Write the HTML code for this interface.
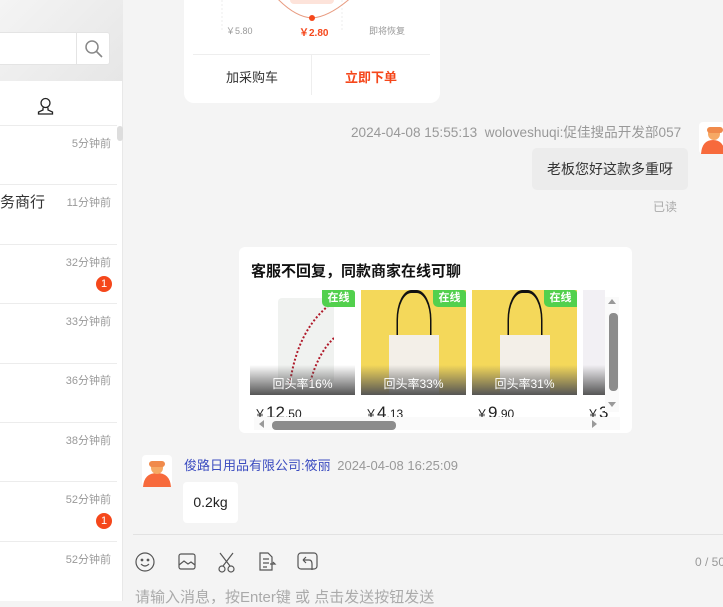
<!DOCTYPE html>
<html><head><meta charset="utf-8"><style>
*{margin:0;padding:0;box-sizing:border-box}
body{width:723px;height:601px;overflow:hidden;background:#f4f4f4;font-family:"Liberation Sans","Noto Sans CJK SC",sans-serif;position:relative}
.abs{position:absolute}
.left{left:0;top:0;width:123px;height:601px;background:#fff;border-right:1px solid #e8e8e8}
.hdr{left:0;top:0;width:123px;height:81px;background:linear-gradient(135deg,#f4f4f4,#e6e6e6)}
.sep{position:absolute;left:0;width:117px;height:1px;background:#ececec}
.tm{position:absolute;right:12px;font-size:11px;color:#999;white-space:nowrap;margin-top:-2px}
.badge{position:absolute;left:96px;width:16px;height:16px;border-radius:8px;background:#f5471b;color:#fff;font-size:11px;text-align:center;line-height:16px}
.card{background:#fff;border-radius:10px}
.prod{position:absolute;top:43px;width:105px;height:105px;overflow:hidden}
.online{position:absolute;right:0;top:0;width:33px;height:17px;background:#52d04d;color:#fff;font-size:11px;font-weight:bold;text-align:center;line-height:17px;border-radius:0 3px 0 5px}
.ov{position:absolute;left:0;bottom:0;width:105px;height:30px;background:linear-gradient(#ffffff00,#555);color:#fff;font-size:12px;text-align:center;line-height:38px}
.pr{position:absolute;top:156px;font-size:12px;color:#222}
.pr b{font-weight:normal;font-size:17px}
</style></head><body>
<div class="abs left"></div>
<div class="abs hdr"></div>
<div class="abs" style="left:0;top:32px;width:110px;height:33px;background:#fff;border:1px solid #e4e4e4;border-left:none;border-radius:0 3px 3px 0"></div>
<div class="abs" style="left:76px;top:32px;width:1px;height:33px;background:#e4e4e4"></div>
<svg class="abs" style="left:84px;top:39px" width="20" height="20" viewBox="0 0 20 20"><circle cx="8" cy="8" r="6" fill="none" stroke="#888" stroke-width="1.5"/><path d="M12.5 12.5L18 18" stroke="#888" stroke-width="1.6"/></svg>
<svg class="abs" style="left:37px;top:97px" width="17" height="18" viewBox="0 0 17 18"><circle cx="8.5" cy="6" r="4.5" fill="none" stroke="#222" stroke-width="1.3"/><path d="M6 10.5v2.5L1.5 15v2h14v-2L11 13v-2.5" fill="none" stroke="#222" stroke-width="1.3"/></svg>
<div class="abs" style="left:0;top:0;width:123px;height:601px">
<div class="sep" style="top:125px"></div>
<div class="abs" style="left:117px;top:126px;width:6px;height:15px;background:#ddd;border-radius:3px"></div>
<div class="tm" style="top:137px">5分钟前</div>
<div class="sep" style="top:184px"></div>
<div style="position:absolute;left:0;top:191px;font-size:15px;color:#333">务商行</div>
<div class="tm" style="top:196px">11分钟前</div>
<div class="sep" style="top:244px"></div>
<div class="tm" style="top:256px">32分钟前</div>
<div class="badge" style="top:276px">1</div>
<div class="sep" style="top:303px"></div>
<div class="tm" style="top:315px">33分钟前</div>
<div class="sep" style="top:363px"></div>
<div class="tm" style="top:374px">36分钟前</div>
<div class="sep" style="top:422px"></div>
<div class="tm" style="top:434px">38分钟前</div>
<div class="sep" style="top:481px"></div>
<div class="tm" style="top:493px">52分钟前</div>
<div class="badge" style="top:513px">1</div>
<div class="sep" style="top:541px"></div>
<div class="tm" style="top:553px">52分钟前</div>
</div>

<div class="abs card" style="left:184px;top:-20px;width:256px;height:123px"></div>
<svg class="abs" style="left:184px;top:0" width="256" height="40"><path d="M38 0v30M158 0v30" stroke="#eee" stroke-dasharray="2 2"/><path d="M90 -5Q110 17 128 18Q146 17 170 -5" fill="none" stroke="#e89b80" stroke-width="1"/><circle cx="128" cy="18" r="3" fill="#f5471b"/><rect x="106" y="-6" width="44" height="10" rx="4" fill="#fde3da"/></svg>
<div class="abs" style="left:226px;top:24px;font-size:9px;color:#999">￥5.80</div>
<div class="abs" style="left:299px;top:24px;font-size:10px;color:#f5471b;font-weight:bold">￥2.80</div>
<div class="abs" style="left:369px;top:24px;font-size:9px;color:#999">即将恢复</div>
<div class="abs" style="left:193px;top:54px;width:237px;height:1px;background:#eee"></div>
<div class="abs" style="left:311px;top:55px;width:1px;height:40px;background:#eee"></div>
<div class="abs" style="left:226px;top:67px;font-size:13px;color:#333">加采购车</div>
<div class="abs" style="left:345px;top:67px;font-size:13px;color:#f5471b;font-weight:bold">立即下单</div>

<div class="abs" style="left:351px;top:121px;font-size:13.6px;color:#999;white-space:nowrap">2024-04-08 15:55:13&nbsp; woloveshuqi:促佳搜品开发部057</div>
<svg class="abs" style="left:699px;top:122px" width="26" height="32"><rect width="26" height="32" rx="4" fill="#fff"/><path d="M2 32Q3 18 14 18Q25 18 26 32Z" fill="#f76a3c"/><circle cx="15" cy="12" r="6" fill="#f6a964"/><rect x="8" y="5" width="16" height="6" rx="3" fill="#f08a4b"/></svg>
<div class="abs" style="left:532px;top:148px;width:156px;height:42px;background:#ececec;border-radius:5px;font-size:14px;color:#333;line-height:42px;text-align:center">老板您好这款多重呀</div>
<div class="abs" style="left:653px;top:198px;font-size:12px;color:#aaa">已读</div>

<div class="abs card" style="left:239px;top:247px;width:393px;height:186px;border-radius:6px;overflow:hidden">
<div style="position:absolute;left:12px;top:13px;font-size:15px;font-weight:bold;color:#111">客服不回复，同款商家在线可聊</div>
<div class="prod" style="left:11px;background:#fff"><div style="position:absolute;left:28px;top:8px;width:56px;height:85px;background:#f0f2f0;border-radius:4px"></div><svg class="abs" style="left:28px;top:8px" width="56" height="85"><path d="M54 5Q20 30 12 85M56 40Q40 55 32 85" fill="none" stroke="#b01a2a" stroke-width="2" stroke-dasharray="2 2"/></svg><div class="online">在线</div><div class="ov">回头率16%</div></div>
<div class="prod" style="left:122px;background:#f4d85a"><div style="position:absolute;left:18px;top:0;width:70px;height:50px;border:3px solid #111;border-bottom:none;border-radius:30px 30px 0 0;transform:scaleX(.5)"></div><div style="position:absolute;left:28px;top:45px;width:50px;height:60px;background:#f3efe8"></div><div class="online">在线</div><div class="ov">回头率33%</div></div>
<div class="prod" style="left:233px;background:#f4d85a"><div style="position:absolute;left:18px;top:0;width:70px;height:50px;border:3px solid #111;border-bottom:none;border-radius:30px 30px 0 0;transform:scaleX(.5)"></div><div style="position:absolute;left:28px;top:45px;width:50px;height:60px;background:#f3efe8"></div><div class="online">在线</div><div class="ov">回头率31%</div></div>
<div class="prod" style="left:344px;width:22px;background:#f2f0f4"><div class="ov" style="width:22px"></div></div>
<div class="pr" style="left:15px">￥<b>12</b>.50</div>
<div class="pr" style="left:126px">￥<b>4</b>.13</div>
<div class="pr" style="left:237px">￥<b>9</b>.90</div>
<div class="pr" style="left:348px">￥<b>3</b></div>
<div style="position:absolute;left:366px;top:50px;width:14px;height:115px;background:#fafafa"></div>
<div style="position:absolute;left:369px;top:52px;border:4px solid transparent;border-bottom:5px solid #999;border-top:none"></div>
<div style="position:absolute;left:369px;top:155px;border:4px solid transparent;border-top:5px solid #999;border-bottom:none"></div>
<div style="position:absolute;left:370px;top:66px;width:9px;height:78px;background:#8c8c8c;border-radius:4px"></div>
<div style="position:absolute;left:15px;top:170px;width:366px;height:13px;background:#fafafa"></div>
<div style="position:absolute;left:20px;top:173px;border:4px solid transparent;border-right:5px solid #999;border-left:none"></div>
<div style="position:absolute;left:353px;top:173px;border:4px solid transparent;border-left:5px solid #999;border-right:none"></div>
<div style="position:absolute;left:33px;top:174px;width:124px;height:9px;background:#8c8c8c;border-radius:4px"></div>
</div>

<svg class="abs" style="left:142px;top:455px" width="30" height="32"><rect width="30" height="32" rx="4" fill="#fff"/><path d="M1 32Q2 18 15 18Q28 18 29 32Z" fill="#f76a3c"/><circle cx="15" cy="13" r="6" fill="#f6a964"/><rect x="7" y="6" width="16" height="6" rx="3" fill="#f08a4b"/></svg>
<div class="abs" style="left:184px;top:455px;font-size:13px;color:#3b4cc0;white-space:nowrap">俊路日用品有限公司:筱丽 <span style="color:#999;margin-left:3px">2024-04-08 16:25:09</span></div>
<div class="abs" style="left:183px;top:482px;width:55px;height:41px;background:#fff;border-radius:4px;font-size:14px;color:#222;text-align:center;line-height:41px">0.2kg</div>
<div class="abs" style="left:133px;top:534px;width:590px;height:1px;background:#e2e2e2"></div>
<svg class="abs" style="left:133px;top:550px" width="200" height="24" fill="none" stroke="#555" stroke-width="1.2"><circle cx="12" cy="12" r="9"/><circle cx="9" cy="10" r=".8" fill="#555"/><circle cx="15" cy="10" r=".8" fill="#555"/><path d="M8 14q4 4 8 0"/><rect x="46" y="4" width="16" height="15" rx="2"/><path d="M46 15l5-4 4 3 3-2 4 3"/><circle cx="89" cy="19" r="3"/><circle cx="98" cy="19" r="3"/><path d="M90 16L100 3M97 16L87 3"/><path d="M127 3h8l4 4v13h-12z M130 9h6M130 13h6M130 17h4M137 14h5l-2-2"/><rect x="165" y="3" width="19" height="16" rx="3"/><path d="M170 10l3-3M170 10l3 3M170 10h6q3 0 3 4v6"/></svg>
<div class="abs" style="left:695px;top:555px;font-size:12px;color:#999;white-space:nowrap">0 / 50</div>
<div class="abs" style="left:135px;top:586px;font-size:15px;color:#aaa;white-space:nowrap">请输入消息，按Enter键 或 点击发送按钮发送</div>
</body></html>
